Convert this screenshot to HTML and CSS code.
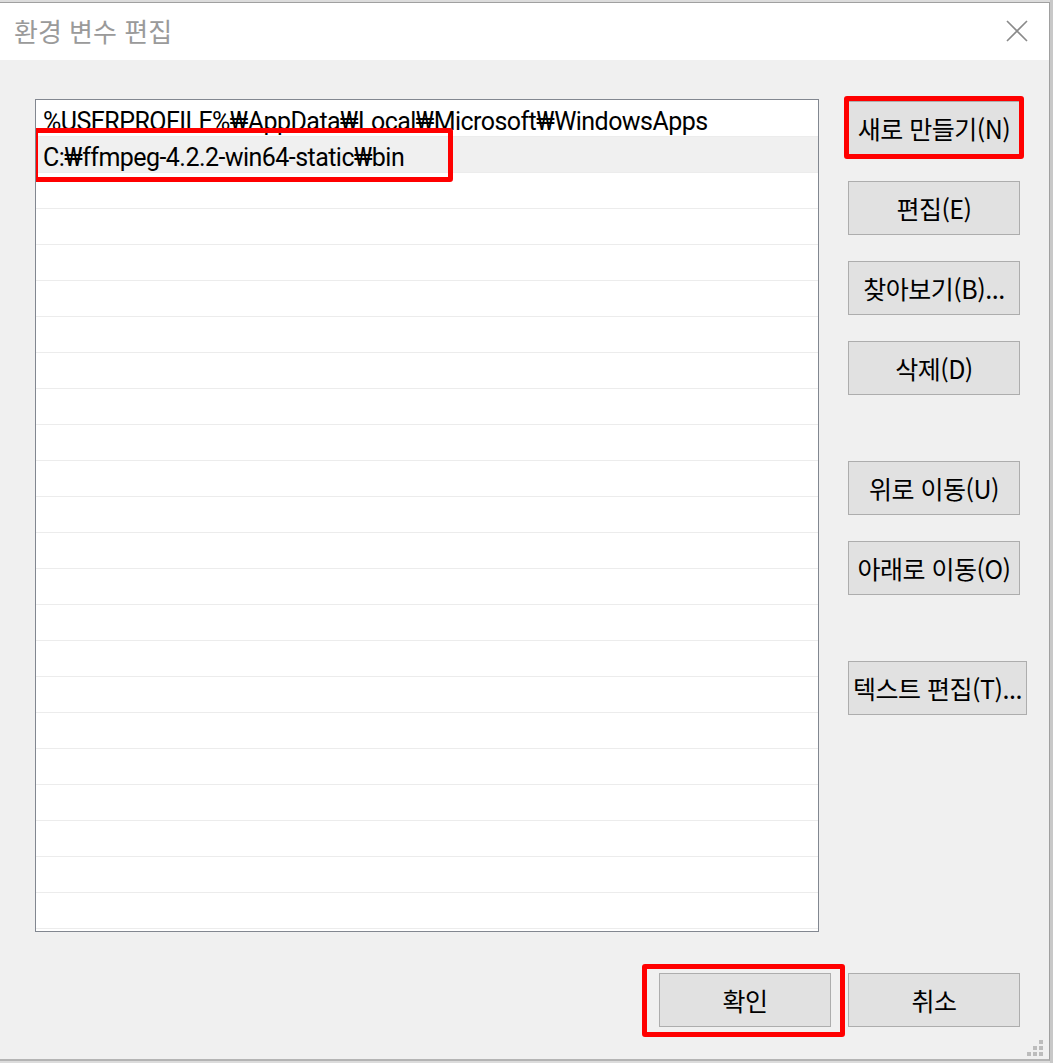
FILE: index.html
```html
<!DOCTYPE html>
<html lang="ko">
<head>
<meta charset="utf-8">
<title>환경 변수 편집</title>
<link rel="stylesheet" href="styles.css">
</head>
<body>
<div class="backdrop">
  <div class="dialog">
    <div class="titlebar">
      <span class="title">환경 변수 편집</span>
      <svg class="close" width="22" height="22" viewBox="0 0 22 22"><path d="M1 1 L21 21 M21 1 L1 21" stroke="#8a8a8a" stroke-width="1.6" fill="none"/></svg>
    </div>
    <div class="body">
      <div class="main">
        <div class="list">
          <div class="row">%USERPROFILE%₩AppData₩Local₩Microsoft₩WindowsApps</div>
          <div class="row selected">C:₩ffmpeg-4.2.2-win64-static₩bin<span class="mark-row"></span></div>
          <div class="row"></div><div class="row"></div><div class="row"></div><div class="row"></div>
          <div class="row"></div><div class="row"></div><div class="row"></div><div class="row"></div>
          <div class="row"></div><div class="row"></div><div class="row"></div><div class="row"></div>
          <div class="row"></div><div class="row"></div><div class="row"></div><div class="row"></div>
          <div class="row"></div><div class="row"></div><div class="row"></div><div class="row"></div>
          <div class="row"></div>
        </div>
        <div class="side">
          <button class="btn marked-new">새로 만들기(N)</button>
          <button class="btn">편집(E)</button>
          <button class="btn">찾아보기(B)...</button>
          <button class="btn">삭제(D)</button>
          <button class="btn gap-top">위로 이동(U)</button>
          <button class="btn">아래로 이동(O)</button>
          <button class="btn wide gap-top">텍스트 편집(T)...</button>
        </div>
      </div>
      <div class="footer">
        <button class="btn marked-ok">확인</button>
        <button class="btn">취소</button>
      </div>
      <div class="grip"><i></i><i></i><i></i><i></i><i></i><i></i></div>
    </div>
  </div>
</div>
</body>
</html>
```

FILE: styles.css
```css
* { box-sizing: border-box; }
html, body { margin: 0; padding: 0; }
body {
  background: #f0f0f0;
  font-family: "Noto Sans CJK KR", sans-serif;
  width: 1053px;
  height: 1063px;
  overflow: hidden;
}
.backdrop {
  padding-top: 2px;
  border-right: 3px solid #c8c8c8;
  width: 1053px;
  height: 1063px;
  background: #dcdcdc;
}
.dialog {
  width: 1050px;
  height: 1059px;
  border-top: 1px solid #a0a0a0;
  border-right: 1px solid #a0a0a0;
  border-bottom: 2px solid #b4b4b4;
  background: #f0f0f0;
  display: flex;
  flex-direction: column;
}
.titlebar {
  height: 57px;
  background: #ffffff;
  display: flex;
  align-items: center;
  justify-content: space-between;
  padding: 0 21px 0 14px;
  flex: none;
}
.title {
  font-family: "Noto Sans CJK KR", sans-serif;
  font-size: 26px;
  color: #9a9a9a;
  margin-top: -3px;
}
.close { margin-top: -2px; }
.body {
  flex: 1;
  position: relative;
  padding: 39px 0 0 35px;
}
.main {
  display: flex;
  align-items: flex-start;
}
.list {
  width: 784px;
  height: 833px;
  border: 1px solid #828790;
  background: #ffffff;
  overflow: hidden;
  padding-top: 1px;
}
.row {
  height: 36px;
  border-bottom: 1px solid #ececec;
  font-family: "Roboto", "Noto Sans", "Noto Sans CJK KR", sans-serif;
  font-size: 25px;
  line-height: 35px;
  letter-spacing: -0.55px;
  color: #000;
  padding: 3px 0 0 7px;
  white-space: nowrap;
  position: relative;
}
.row.selected { background: #f0f0f0; }
.mark-row {
  position: absolute;
  left: -3px;
  top: -9px;
  width: 420px;
  height: 54px;
  border: 5px solid #ff0000;
  border-radius: 3px;
}
.side {
  margin-left: 29px;
  display: flex;
  flex-direction: column;
  gap: 26px;
  padding-top: 2px;
}
.btn {
  width: 172px;
  height: 54px;
  background: #e1e1e1;
  border: 1px solid #adadad;
  font-family: "Noto Sans CJK KR", sans-serif;
  font-size: 25px;
  line-height: 1;
  color: #000;
  padding: 0;
  position: relative;
  white-space: nowrap;
  letter-spacing: -0.5px;
}
.btn.wide { width: 179px; }
.gap-top { margin-top: 40px; }
.marked-new::after {
  content: "";
  position: absolute;
  left: -5px; right: -5px; top: -6px; bottom: -5px;
  border: 5px solid #ff0000;
  border-radius: 3px;
}
.footer {
  display: flex;
  gap: 17px;
  margin-top: 41px;
  margin-left: 624px;
}
.marked-ok::after {
  content: "";
  position: absolute;
  left: -18px; right: -15px; top: -10px; bottom: -11px;
  border: 5px solid #ff0000;
  border-radius: 3px;
}
.grip {
  position: absolute;
  right: 6px;
  bottom: 3px;
  width: 16px;
  height: 16px;
}
.grip i {
  position: absolute;
  width: 4px;
  height: 4px;
  background: #bcbcbc;
}
.grip i:nth-child(1) { right: 0; bottom: 0; }
.grip i:nth-child(2) { right: 6px; bottom: 0; }
.grip i:nth-child(3) { right: 12px; bottom: 0; }
.grip i:nth-child(4) { right: 0; bottom: 6px; }
.grip i:nth-child(5) { right: 6px; bottom: 6px; }
.grip i:nth-child(6) { right: 0; bottom: 12px; }
```
